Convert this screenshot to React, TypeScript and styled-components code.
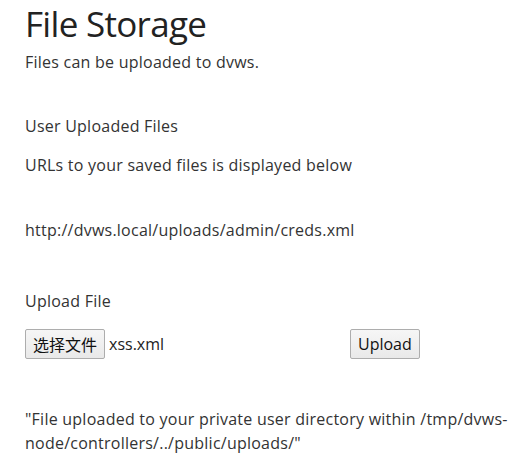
import React from "react";
import styled, { createGlobalStyle } from "styled-components";

const Global = createGlobalStyle`
  html, body { margin: 0; padding: 0; background: #ffffff; }
  body {
    font-family: "Open Sans", "Noto Sans CJK SC", sans-serif;
    color: #333333;
    font-size: 16px;
  }
`;

const Page = styled.main`
  display: flex;
  flex-direction: column;
  padding: 2px 16px 0 25px;
`;

const Title = styled.h1`
  margin: 0;
  font-size: 35px;
  font-weight: 400;
  line-height: 44px;
  letter-spacing: -0.7px;
  color: #222;
`;

const Text = styled.p<{ $top: number }>`
  margin: ${(p) => p.$top}px 0 0;
  font-size: 16px;
  line-height: 24px;
  letter-spacing: 0.24px;
`;

const Row = styled.form`
  display: flex;
  align-items: center;
  margin-top: 16px;
`;

const FilePicker = styled.div`
  display: flex;
  align-items: center;
  gap: 4px;
  width: 321px;
  margin-right: 4px;
`;

const Button = styled.button<{ $cjk?: boolean }>`
  font-family: ${(p) =>
    p.$cjk ? '"Noto Sans CJK SC", sans-serif' : '"Open Sans", "Noto Sans CJK SC", sans-serif'};
  font-size: 16px;
  color: #111;
  height: 30px;
  padding: 0 7px;
  background: linear-gradient(#f6f6f6, #e9e9e9);
  border: 1px solid #adadad;
  border-radius: 2px;
  line-height: 28px;
`;

const FileName = styled.span`
  font-size: 16px;
  color: #222;
`;

export default function App() {
  return (
    <>
      <Global />
      <Page>
        <Title>File Storage</Title>
        <Text $top={4}>Files can be uploaded to dvws.</Text>
        <Text $top={40}>User Uploaded Files</Text>
        <Text $top={15}>URLs to your saved files is displayed below</Text>
        <Text $top={41}>http://dvws.local/uploads/admin/creds.xml</Text>
        <Text $top={47}>Upload File</Text>
        <Row onSubmit={(e) => e.preventDefault()}>
          <FilePicker>
            <Button type="button" $cjk>选择文件</Button>
            <FileName>xss.xml</FileName>
          </FilePicker>
          <Button type="submit">Upload</Button>
        </Row>
        <Text $top={48}>
          "File uploaded to your private user directory within /tmp/dvws-node/controllers/../public/uploads/"
        </Text>
      </Page>
    </>
  );
}
